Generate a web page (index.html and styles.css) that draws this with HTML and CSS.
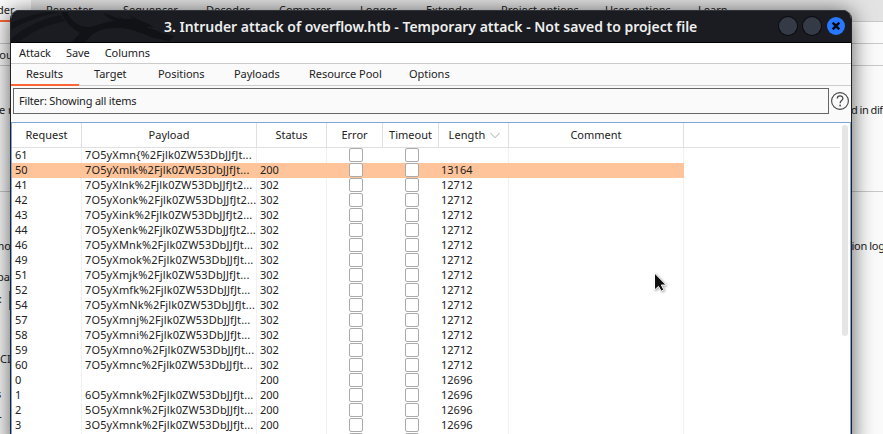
FILE: index.html
```html
<!DOCTYPE html>
<html lang="en">
<head>
<meta charset="utf-8">
<title>Intruder attack</title>
<link rel="stylesheet" href="styles.css">
</head>
<body>
<div class="desktop">
  <div class="parent">
    <div class="parent-tabs">
      <span class="ptab active">der</span><span class="ptab repeater">Repeater</span><span class="ptab sequencer">Sequencer</span><span class="ptab decoder">Decoder</span><span class="ptab comparer">Comparer</span><span class="ptab logger">Logger</span><span class="ptab extender">Extender</span><span class="ptab project">Project options</span><span class="ptab user">User options</span><span class="ptab">Learn</span>
    </div>
    <div class="strip"></div>
    <div class="strip sou">sou</div>
    <div class="section first"><span class="left-text">e r</span><span class="right-text">d in diff</span></div>
    <div class="section second">
      <div class="line"><span class="mod">mo</span><span class="log">tion log</span></div>
      <div class="line payload-label">pay</div>
      <div class="line field-label">:<i></i></div>
      <div class="line ci-label">CI</div>
      <div class="line s-label">s</div>
      <div class="line t-label">r</div>
    </div>
  </div>

  <main class="window">
    <header class="titlebar">
      <svg class="dragon" width="170" height="31" viewBox="0 0 170 31">
        <path d="M0 12C12 6 24 3 38 1H48C30 5 14 10 0 19ZM0 31V28C14 15 32 8 49 4L54 10C35 14 20 21 8 31Z" fill="#121418"/>
        <path d="M50 1H56C60 10 68 17 80 16C94 12 108 7 124 8L138 13L148 21L163 25L158 30L143 27L130 22C112 15 94 15 82 23L74 31H61L69 22C60 17 53 9 50 1Z" fill="#101216"/>
        <path d="M93 2C96 8 103 10 112 10L105 3C110 8 117 10 125 10L117 3C124 8 130 9 136 13L133 17Z" fill="#101216"/>
        <path d="M137 16L147 19" stroke="#202329" fill="none"/>
      </svg>
      <h1>3. Intruder attack of overflow.htb - Temporary attack - Not saved to project file</h1>
      <div class="controls"><i></i><i></i><i class="close"><svg width="18" height="18" viewBox="0 0 18 18"><path d="M5.7 5.7l6.6 6.6M12.3 5.7l-6.6 6.6" stroke="#07090f" stroke-width="2.5"/></svg></i></div>
    </header>
    <nav class="menu"><span>Attack</span><span>Save</span><span>Columns</span></nav>
    <nav class="tabs"><span class="selected">Results</span><span class="target">Target</span><span class="positions">Positions</span><span class="payloads">Payloads</span><span class="pool">Resource Pool</span><span>Options</span></nav>
    <section class="filter">
      <div class="filter-box">Filter: Showing all items</div>
      <svg class="help" width="20" height="20" viewBox="0 0 20 20"><circle cx="10" cy="10" r="8.4" fill="none" stroke="#444" stroke-width="1.1"/><path d="M7.3 7.5C7.3 4 12.9 4 12.9 7.4C12.9 9.7 10.1 9.5 10.1 12.2" fill="none" stroke="#444" stroke-width="1.2"/><circle cx="10.1" cy="14.5" r=".9" fill="#444"/></svg>
    </section>
    <section class="results">
      <div class="grid">
        <div class="row head"><span>Request</span><span>Payload</span><span>Status</span><span>Error</span><span>Timeout</span><span class="length">Length<svg width="10" height="7" viewBox="0 0 10 7"><path d="M.5 1L5 5.7L9.5 1" fill="none" stroke="#aaa"/></svg></span><span>Comment</span><span></span></div>
        <div id="rows"></div>
      </div>
      <div class="scroll"><i></i></div>
    </section>
  </main>

  <svg class="cursor" width="16" height="23" viewBox="0 0 16 23"><path d="M1.5 1V18L5.5 14.4L8.2 19.2L10.8 17.8L8.4 13H13.2Z" fill="#111" stroke="#fff" stroke-width="1"/></svg>
</div>
<script src="rows.js"></script>
</body>
</html>
```
FILE: styles.css
```css
* { box-sizing: border-box; }
body { margin: 0; font-family: "Noto Sans", sans-serif; font-size: 11px; line-height: 15px; color: #222; }
.desktop { position: relative; width: 883px; height: 434px; overflow: hidden; background: #fafafa; }
.parent { height: 434px; display: flex; flex-direction: column; }
.parent-tabs { height: 22px; display: flex; background: #e3e3e3; border-bottom: 1px solid #c8c8c8; white-space: nowrap; padding-top: 2px; }
.ptab { flex: none; width: 76px; }
.ptab.active { width: 31px; height: 22px; margin: -2px 15px 0 0; padding-top: 2px; text-indent: -3px; background: #fafafa; border-bottom: 2px solid #ff6633; }
.repeater { width: 77px; }
.sequencer { width: 83px; }
.decoder { width: 73px; }
.comparer { width: 81px; }
.logger { width: 66px; }
.extender { width: 75px; }
.project { width: 104px; }
.user { width: 93px; }
.strip { height: 22px; border-bottom: 1px solid #c8c8c8; padding-top: 3px; }
.sou { text-indent: -6px; }
.section.first { height: 126px; border-bottom: 1px solid #c8c8c8; padding-top: 36px; display: flex; justify-content: space-between; white-space: nowrap; }
.left-text { text-indent: -1px; }
.right-text { width: 32px; letter-spacing: -.5px; }
.section.second { padding-top: 46px; white-space: nowrap; }
.line { height: 15px; display: flex; justify-content: space-between; }
.mod { text-indent: -6px; }
.log { width: 35px; letter-spacing: -.35px; }
.payload-label { margin-top: 16px; text-indent: -3px; }
.field-label { margin-top: 7px; justify-content: flex-start; gap: 7px; text-indent: -1px; }
.field-label i { width: 4px; height: 19px; border: 1px solid #777; }
.ci-label { margin-top: 45px; }
.s-label { margin-top: 20px; text-indent: -4px; }
.t-label { margin-top: 10px; text-indent: -3px; }
.window { position: absolute; left: 10px; top: 10px; width: 842px; height: 440px; border: 1px solid #222; border-top: 0; border-radius: 9px 9px 0 0; background: #fafafa; box-shadow: 0 2px 22px rgba(0,0,0,.65); display: flex; flex-direction: column; overflow: hidden; }
.titlebar { position: relative; flex: none; height: 33px; background: #1a1c21; border-top: 1px solid #30333a; border-bottom: 1px solid #000; display: flex; align-items: center; }
.dragon { position: absolute; left: 0; top: 0; }
h1 { position: relative; margin: 0 0 0 153px; color: #eee; font-size: 14px; line-height: 20px; font-weight: 600; letter-spacing: -.015px; white-space: nowrap; flex: 1; }
.controls { display: flex; gap: 6px; padding-right: 6px; margin-top: -2px; }
.controls i { width: 18px; height: 18px; border-radius: 50%; background: #353a47; box-shadow: 0 0 0 1px #0b0c10; }
.controls .close { background: #2777ff; box-shadow: none; }
.controls svg { display: block; }
.menu { flex: none; height: 21px; background: #fff; border-bottom: 1px solid #ccc; display: flex; gap: 16px; padding: 2px 8px; letter-spacing: -.06px; }
.menu span:nth-child(2) { margin-left: -1px; }
.menu span:nth-child(3) { margin-left: -1px; }
.tabs { flex: none; height: 22px; border-bottom: 1px solid #ccc; display: flex; padding-top: 2px; white-space: nowrap; letter-spacing: -.04px; }
.tabs span { flex: none; height: 20px; }
.tabs .selected { width: 68px; padding-left: 15px; margin-right: 15px; border-bottom: 2px solid #ff6633; }
.target { width: 64px; }
.positions { width: 76px; }
.payloads { width: 75px; }
.pool { width: 100px; }
.filter { flex: none; height: 36px; display: flex; align-items: flex-start; padding: 2px 1px 0 2px; gap: 1px; }
.filter-box { width: 816px; height: 26px; border: 1px solid #666; padding: 4px 5px; letter-spacing: -.2px; }
.help { margin-top: 3px; }
.results { flex: 1; border: 1px solid #7aa7d9; background: #fff; display: flex; }
.grid { width: 828px; }
.row { display: grid; grid-template-columns: 70px 175px 70px 56px 56px 70px 175px 1fr; height: 15px; line-height: 13px; }
.row span { height: 15px; padding-left: 3px; border-right: 1px solid #f1f1f1; white-space: nowrap; overflow: hidden; }
.row span:nth-child(6) { padding-left: 2px; }
.row span:last-child { border: 0; }
.row .payload { letter-spacing: .13px; }
.head { height: 25px; line-height: 15px; border-bottom: 1px solid #e0e0e0; }
.row.head span { height: 24px; padding: 4px 0 0; text-align: center; border-color: #e0e0e0; }
.row.head .length { padding-left: 2px; letter-spacing: .08px; }
.head svg { margin-left: 5px; }
.row .check { padding: 0; display: flex; justify-content: center; border: 0; overflow: visible; }
.check i { width: 14px; height: 14px; border: 1px solid #aaa; border-radius: 2px; background: #fff; margin-left: 2px; }
.highlight span { background: #ffc499; border-color: #ffc499; }
.highlight .rest { background: none; }
.scroll { flex: 1; padding: 2px 0 0 2px; }
.scroll i { display: block; width: 6px; height: 211px; border-radius: 3px; background: #e5e5e5; }
.cursor { position: absolute; left: 653px; top: 272px; filter: drop-shadow(1px 1px 1px rgba(0,0,0,.35)); }
```
FILE: rows.js
```js
const tail = '%2Fjlk0ZW53DbJJfJt';
const data = [
  [61, '7O5yXmn{', '', '', ''], [50, '7O5yXmlk', '', 200, 13164],
  [41, '7O5yXlnk', '2', 302, 12712], [42, '7O5yXonk', '2', 302, 12712],
  [43, '7O5yXink', '2', 302, 12712], [44, '7O5yXenk', '2', 302, 12712],
  [46, '7O5yXMnk', '', 302, 12712], [49, '7O5yXmok', '', 302, 12712],
  [51, '7O5yXmjk', '', 302, 12712], [52, '7O5yXmfk', '', 302, 12712],
  [54, '7O5yXmNk', '', 302, 12712], [57, '7O5yXmnj', '', 302, 12712],
  [58, '7O5yXmni', '', 302, 12712], [59, '7O5yXmno', '', 302, 12712],
  [60, '7O5yXmnc', '', 302, 12712], [0, '', '', 200, 12696],
  [1, '6O5yXmnk', '', 200, 12696], [2, '5O5yXmnk', '', 200, 12696],
  [3, '3O5yXmnk', '', 200, 12696], ['', '', '', '', '']
];
document.getElementById('rows').innerHTML = data.map(([id, start, end, status, length]) =>
  `<div class="row${id === 50 ? ' highlight' : ''}"><span>${id}</span><span class="payload">${start ? start + tail + end + '...' : ''}</span><span>${status}</span><span class="check"><i></i></span><span class="check"><i></i></span><span>${length}</span><span></span><span${id === 50 ? ' class="rest"' : ''}></span></div>`).join('');
```
